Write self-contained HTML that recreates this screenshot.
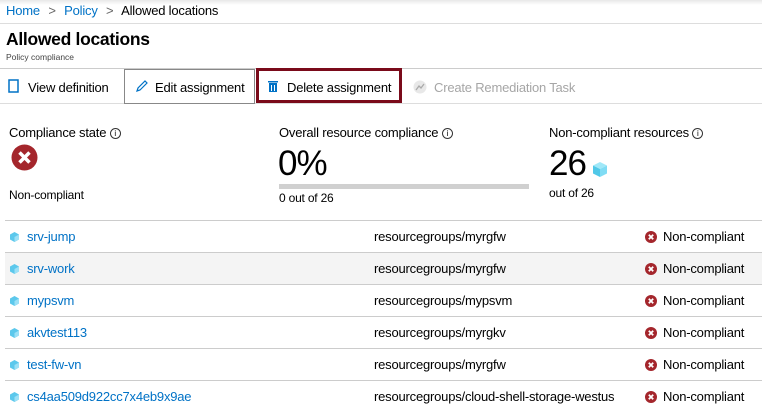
<!DOCTYPE html>
<html><head><meta charset="utf-8"><style>
*{margin:0;padding:0;box-sizing:border-box}
body{width:762px;height:410px;overflow:hidden;background:#fff;font-family:"Liberation Sans",sans-serif;color:#000;position:relative}
.a{position:absolute;white-space:nowrap}
.lk{color:#0072c6}
.cube{display:inline-block;width:9px;height:10px;position:absolute}
.row{position:absolute;left:5px;width:757px;height:32px;border-bottom:1px solid #ccc}
.row span{position:absolute;top:8px;font-size:13px;letter-spacing:-0.2px}
.xs{position:absolute;left:640px;top:10px;width:12px;height:12px}
.t{font-size:13px;letter-spacing:-0.2px}
.i{display:inline-block;width:11px;height:11px;border:1px solid #333;border-radius:50%;font-size:8px;text-align:center;line-height:10px;vertical-align:1px}
</style></head><body>
<div class="a" style="left:0;top:0;width:762px;height:5px;background:linear-gradient(#e8e8e8,#fff)"></div>
<div class="a t" style="left:6px;top:3px"><span class="lk">Home</span> <span style="color:#666;margin:0 5px">&gt;</span> <span class="lk">Policy</span> <span style="color:#666;margin:0 5px">&gt;</span> Allowed locations</div>
<div class="a" style="left:0;top:23px;width:762px;height:1px;background:#ddd"></div>
<div class="a" style="left:6px;top:29px;font-size:17.5px;font-weight:bold;letter-spacing:-0.3px">Allowed locations</div>
<div class="a" style="left:6px;top:52px;font-size:8.5px;color:#444">Policy compliance</div>
<div class="a" style="left:0;top:68px;width:762px;height:1px;background:#ccc"></div>
<div class="a" style="left:0;top:103px;width:762px;height:1px;background:#ddd"></div>
<svg class="a" style="left:8px;top:79px" width="12" height="15"><rect x="1" y="1" width="9" height="12" fill="none" stroke="#0072c6" stroke-width="1.5"/></svg>
<div class="a t" style="left:28px;top:80px">View definition</div>
<div class="a" style="left:124px;top:69px;width:131px;height:35px;border:1px solid #888"></div>
<svg class="a" style="left:135px;top:79px" width="14" height="14"><path d="M2 12 L3 9 L10 2 L12 4 L5 11 Z" fill="none" stroke="#0072c6" stroke-width="1.2"/></svg>
<div class="a t" style="left:155px;top:80px">Edit assignment</div>
<div class="a" style="left:256px;top:68px;width:146px;height:35px;border:3px solid #7a0a1a"></div>
<svg class="a" style="left:267px;top:80px" width="12" height="13"><rect x="1" y="1" width="10" height="1.5" fill="#0072c6"/><rect x="2" y="3" width="8" height="9" fill="#0072c6"/><rect x="4" y="5" width="1" height="6" fill="#fff"/><rect x="7" y="5" width="1" height="6" fill="#fff"/></svg>
<div class="a t" style="left:287px;top:80px">Delete assignment</div>
<svg class="a" style="left:413px;top:80px" width="14" height="14"><circle cx="7" cy="7" r="6.5" fill="#e8e8e8"/><path d="M3 10 L6 6 L8 8 L11 4" stroke="#aaa" fill="none" stroke-width="1.3"/></svg>
<div class="a t" style="left:434px;top:80px;color:#a6a6a6">Create Remediation Task</div>

<div class="a t" style="left:9px;top:125px">Compliance state <span class="i">i</span></div>
<svg class="a" style="left:11px;top:144px" width="27" height="27"><circle cx="13.5" cy="13.5" r="13" fill="#a4262c"/><path d="M8.5 8.5 L18.5 18.5 M18.5 8.5 L8.5 18.5" stroke="#fff" stroke-width="3.5"/></svg>
<div class="a" style="left:9px;top:188px;font-size:12px;letter-spacing:-0.2px">Non-compliant</div>

<div class="a t" style="left:279px;top:125px">Overall resource compliance <span class="i">i</span></div>
<div class="a" style="left:278px;top:144px;font-size:35px;letter-spacing:-1px">0%</div>
<div class="a" style="left:279px;top:184px;width:250px;height:5px;background:#d0d0d0"></div>
<div class="a" style="left:279px;top:191px;font-size:12px;letter-spacing:-0.2px">0 out of 26</div>

<div class="a t" style="left:549px;top:125px">Non-compliant resources <span class="i">i</span></div>
<div class="a" style="left:549px;top:144px;font-size:35px;letter-spacing:-1px">26</div>
<svg class="a" style="left:592px;top:161px" width="16" height="17"><path d="M8 1 L15 4.5 L8 8 L1 4.5Z" fill="#a0e8f8"/><path d="M1 4.5 L8 8 L8 16 L1 12.5Z" fill="#50c8e8"/><path d="M15 4.5 L8 8 L8 16 L15 12.5Z" fill="#80dcf4"/></svg>
<div class="a" style="left:549px;top:186px;font-size:12px;letter-spacing:-0.2px">out of 26</div>

<div class="a" style="left:5px;top:220px;width:757px;height:1px;background:#ccc"></div>
<div class="row" style="top:221px"><svg class="cube" style="left:5px;top:11px"><path d="M4.5 0 L9 2.5 L9 7.5 L4.5 10 L0 7.5 L0 2.5Z" fill="#5cc8ec"/><path d="M4.5 5 L9 2.5 L9 7.5 L4.5 10Z" fill="#9be0f6"/></svg><span class="lk" style="left:22px">srv-jump</span><span style="left:369px">resourcegroups/myrgfw</span><svg class="xs"><circle cx="6" cy="6" r="6" fill="#a4262c"/><path d="M3.8 3.8L8.2 8.2M8.2 3.8L3.8 8.2" stroke="#fff" stroke-width="1.8"/></svg><span style="left:658px">Non-compliant</span></div>
<div class="row" style="top:253px;background:#f4f4f4"><svg class="cube" style="left:5px;top:11px"><path d="M4.5 0 L9 2.5 L9 7.5 L4.5 10 L0 7.5 L0 2.5Z" fill="#5cc8ec"/><path d="M4.5 5 L9 2.5 L9 7.5 L4.5 10Z" fill="#9be0f6"/></svg><span class="lk" style="left:22px">srv-work</span><span style="left:369px">resourcegroups/myrgfw</span><svg class="xs"><circle cx="6" cy="6" r="6" fill="#a4262c"/><path d="M3.8 3.8L8.2 8.2M8.2 3.8L3.8 8.2" stroke="#fff" stroke-width="1.8"/></svg><span style="left:658px">Non-compliant</span></div>
<div class="row" style="top:285px"><svg class="cube" style="left:5px;top:11px"><path d="M4.5 0 L9 2.5 L9 7.5 L4.5 10 L0 7.5 L0 2.5Z" fill="#5cc8ec"/><path d="M4.5 5 L9 2.5 L9 7.5 L4.5 10Z" fill="#9be0f6"/></svg><span class="lk" style="left:22px">mypsvm</span><span style="left:369px">resourcegroups/mypsvm</span><svg class="xs"><circle cx="6" cy="6" r="6" fill="#a4262c"/><path d="M3.8 3.8L8.2 8.2M8.2 3.8L3.8 8.2" stroke="#fff" stroke-width="1.8"/></svg><span style="left:658px">Non-compliant</span></div>
<div class="row" style="top:317px"><svg class="cube" style="left:5px;top:11px"><path d="M4.5 0 L9 2.5 L9 7.5 L4.5 10 L0 7.5 L0 2.5Z" fill="#5cc8ec"/><path d="M4.5 5 L9 2.5 L9 7.5 L4.5 10Z" fill="#9be0f6"/></svg><span class="lk" style="left:22px">akvtest113</span><span style="left:369px">resourcegroups/myrgkv</span><svg class="xs"><circle cx="6" cy="6" r="6" fill="#a4262c"/><path d="M3.8 3.8L8.2 8.2M8.2 3.8L3.8 8.2" stroke="#fff" stroke-width="1.8"/></svg><span style="left:658px">Non-compliant</span></div>
<div class="row" style="top:349px"><svg class="cube" style="left:5px;top:11px"><path d="M4.5 0 L9 2.5 L9 7.5 L4.5 10 L0 7.5 L0 2.5Z" fill="#5cc8ec"/><path d="M4.5 5 L9 2.5 L9 7.5 L4.5 10Z" fill="#9be0f6"/></svg><span class="lk" style="left:22px">test-fw-vn</span><span style="left:369px">resourcegroups/myrgfw</span><svg class="xs"><circle cx="6" cy="6" r="6" fill="#a4262c"/><path d="M3.8 3.8L8.2 8.2M8.2 3.8L3.8 8.2" stroke="#fff" stroke-width="1.8"/></svg><span style="left:658px">Non-compliant</span></div>
<div class="row" style="top:381px;border:none"><svg class="cube" style="left:5px;top:11px"><path d="M4.5 0 L9 2.5 L9 7.5 L4.5 10 L0 7.5 L0 2.5Z" fill="#5cc8ec"/><path d="M4.5 5 L9 2.5 L9 7.5 L4.5 10Z" fill="#9be0f6"/></svg><span class="lk" style="left:22px">cs4aa509d922cc7x4eb9x9ae</span><span style="left:369px">resourcegroups/cloud-shell-storage-westus</span><svg class="xs"><circle cx="6" cy="6" r="6" fill="#a4262c"/><path d="M3.8 3.8L8.2 8.2M8.2 3.8L3.8 8.2" stroke="#fff" stroke-width="1.8"/></svg><span style="left:658px">Non-compliant</span></div>
</body></html>
